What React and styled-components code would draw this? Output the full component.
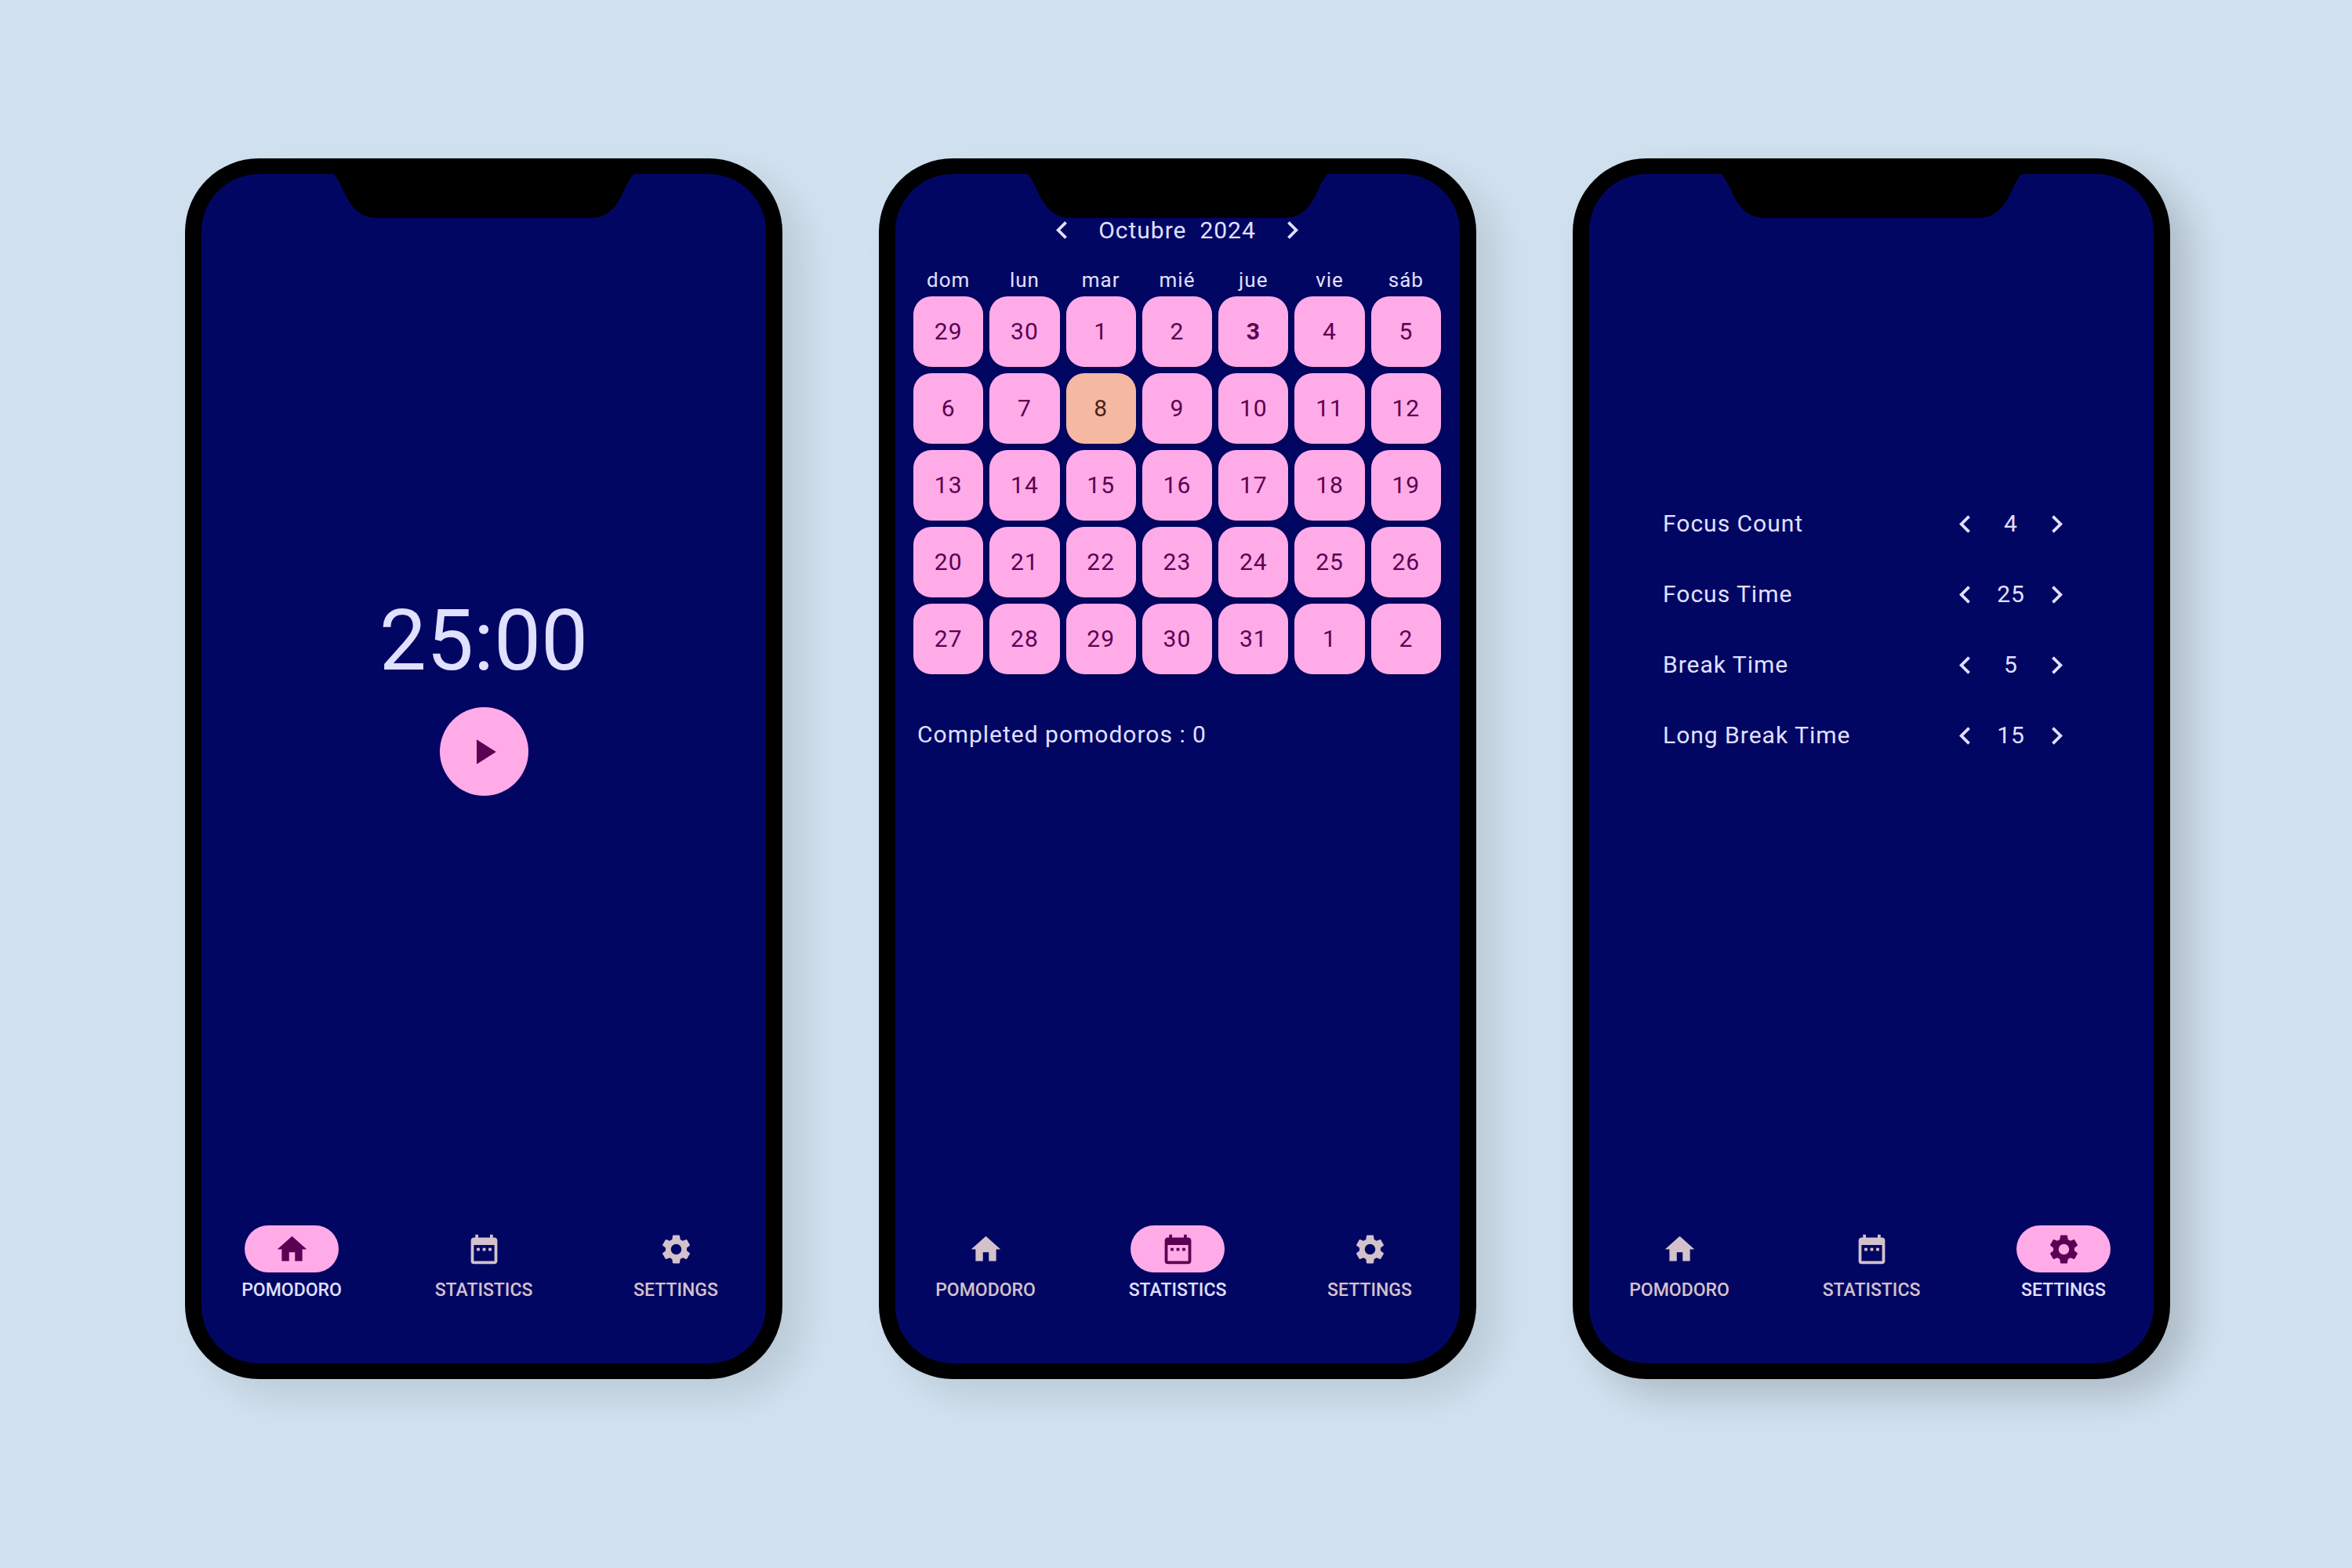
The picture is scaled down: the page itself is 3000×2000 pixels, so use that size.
import React, { useState } from "react";
import styled, { createGlobalStyle, css } from "styled-components";
import {
  MdDateRange,
  MdHome,
  MdKeyboardArrowLeft,
  MdKeyboardArrowRight,
  MdPlayArrow,
  MdSettings,
} from "react-icons/md";

const color = {
  page: "#d1e1ef",
  frame: "#000000",
  screen: "#020663",
  primary: "#ffabe8",
  onPrimary: "#5b0052",
  today: "#f5b8a2",
  onToday: "#4c2314",
  text: "#e0e0ff",
  muted: "#d3c2cc",
};

const GlobalStyle = createGlobalStyle`
  *, *::before, *::after {
    box-sizing: border-box;
  }
  body {
    margin: 0;
    background: ${color.page};
    color: ${color.text};
    font-family: Roboto, "Noto Sans", sans-serif;
    font-size: 30px;
    line-height: 44px;
    letter-spacing: 1px;
  }
  button {
    margin: 0;
    padding: 0;
    border: 0;
    background: none;
    color: inherit;
    font: inherit;
    letter-spacing: inherit;
    cursor: pointer;
  }
`;

const Stage = styled.main`
  display: grid;
  grid-template-columns: repeat(3, minmax(0, 762px));
  justify-content: center;
  align-items: start;
  gap: 123px;
  min-height: 100vh;
  padding: 202px 0 200px 4px;
`;

const Phone = styled.section`
  display: flex;
  aspect-ratio: 762 / 1557;
  padding: 20px 21px;
  border-radius: 94px;
  background: ${color.frame};
  box-shadow: 26px 22px 48px rgba(0, 0, 0, ${(p) => p.$shade});
`;

const Screen = styled.div`
  position: relative;
  flex: 1;
  min-width: 0;
  display: flex;
  flex-direction: column;
  overflow: hidden;
  border-radius: 73px;
  background: ${color.screen};
`;

const NotchShape = styled.svg`
  position: absolute;
  top: 0;
  left: 50%;
  width: 382px;
  height: 56px;
  transform: translateX(-50%);
`;

const Content = styled.div`
  flex: 1;
  display: flex;
  flex-direction: column;
`;

const NavBar = styled.nav`
  display: grid;
  grid-template-columns: repeat(3, 1fr);
  gap: 15px;
  padding: 24px 0 78px;
`;

const NavLink = styled.a`
  display: flex;
  flex-direction: column;
  align-items: center;
  gap: 8px;
  color: ${(p) => (p.$active ? color.text : color.muted)};
  font-size: 23px;
  font-weight: 500;
  line-height: 30px;
  letter-spacing: 0;
  text-decoration: none;
`;

const Pill = styled.span`
  display: grid;
  place-items: center;
  width: 120px;
  height: 60px;
  border-radius: 30px;
  font-size: 45px;
  ${(p) =>
    p.$active &&
    css`
      background: ${color.primary};
      color: ${color.onPrimary};
    `}
`;

const IconButton = styled.button`
  display: grid;
  place-items: center;
  width: 45px;
  height: 45px;
  font-size: 45px;
`;

const TimerContent = styled(Content)`
  align-items: center;
  gap: 24px;
  padding-top: 536px;
`;

const Clock = styled.time`
  font-size: 107px;
  line-height: 120px;
  letter-spacing: 0;
`;

const PlayButton = styled.button`
  display: grid;
  place-items: center;
  width: 113px;
  height: 113px;
  border-radius: 50%;
  background: ${color.primary};
  color: ${color.onPrimary};
  font-size: 54px;
`;

const CalendarContent = styled(Content)`
  padding: 49px 16px 0 15px;
`;

const MonthBar = styled.header`
  display: flex;
  align-items: center;
  justify-content: center;
  gap: 24px;
`;

const Month = styled.h2`
  margin: 0;
  font-size: 30px;
  font-weight: 400;
  white-space: pre;
`;

const Calendar = styled.table`
  width: 100%;
  margin-top: 20px;
  table-layout: fixed;
  border-collapse: separate;
  border-spacing: 8px;
`;

const Weekday = styled.th`
  padding: 0;
  font-size: 26px;
  font-weight: 400;
  line-height: 26px;
`;

const DayCell = styled.td`
  padding: 0;
`;

const DayButton = styled.button`
  display: block;
  width: 100%;
  height: 90px;
  border-radius: 23px;
  background: ${(p) => (p.$today ? color.today : color.primary)};
  color: ${(p) => (p.$today ? color.onToday : color.onPrimary)};
  font-weight: ${(p) => (p.$strong ? 700 : 400)};
  box-shadow: 0 2px 4px rgba(0, 0, 0, 0.2);
`;

const Summary = styled.p`
  margin: 47px 0 0;
  padding: 0 13px;
`;

const SettingsContent = styled(Content)`
  padding: 401px 101px 0 94px;
`;

const SettingRow = styled.div`
  display: flex;
  align-items: center;
  justify-content: space-between;
  height: 90px;
`;

const Stepper = styled.div`
  display: flex;
  align-items: center;
`;

const StepValue = styled.output`
  width: 72px;
  text-align: center;
`;

const tabs = [
  { id: "pomodoro", label: "POMODORO", Icon: MdHome },
  { id: "statistics", label: "STATISTICS", Icon: MdDateRange },
  { id: "settings", label: "SETTINGS", Icon: MdSettings },
];

const weekdays = ["dom", "lun", "mar", "mié", "jue", "vie", "sáb"];

const weeks = [
  [29, 30, 1, 2, 3, 4, 5],
  [6, 7, 8, 9, 10, 11, 12],
  [13, 14, 15, 16, 17, 18, 19],
  [20, 21, 22, 23, 24, 25, 26],
  [27, 28, 29, 30, 31, 1, 2],
];

const settings = [
  { id: "focus-count", label: "Focus Count", value: 4 },
  { id: "focus-time", label: "Focus Time", value: 25 },
  { id: "break-time", label: "Break Time", value: 5 },
  { id: "long-break-time", label: "Long Break Time", value: 15 },
];

function Notch() {
  return (
    <NotchShape viewBox="0 0 382 56" aria-hidden="true">
      <path
        fill={color.frame}
        d="M0 0H382C372 13 370 24 362 36C354 49 342 56 328 56H54C40 56 28 49 20 36C12 24 10 13 0 0Z"
      />
    </NotchShape>
  );
}

function Device({ active, shade, children }) {
  return (
    <Phone $shade={shade}>
      <Screen>
        {children}
        <NavBar>
          {tabs.map(({ id, label, Icon }) => (
            <NavLink
              key={id}
              href={`#${id}`}
              $active={id === active}
              aria-current={id === active ? "page" : undefined}
            >
              <Pill $active={id === active}>
                <Icon aria-hidden="true" />
              </Pill>
              {label}
            </NavLink>
          ))}
        </NavBar>
        <Notch />
      </Screen>
    </Phone>
  );
}

function Setting({ id, label, initial }) {
  const [value, setValue] = useState(initial);
  return (
    <SettingRow role="group" aria-labelledby={id}>
      <span id={id}>{label}</span>
      <Stepper>
        <IconButton aria-label="Decrease" onClick={() => setValue(Math.max(1, value - 1))}>
          <MdKeyboardArrowLeft />
        </IconButton>
        <StepValue>{value}</StepValue>
        <IconButton aria-label="Increase" onClick={() => setValue(value + 1)}>
          <MdKeyboardArrowRight />
        </IconButton>
      </Stepper>
    </SettingRow>
  );
}

export default function App() {
  return (
    <>
      <GlobalStyle />
      <Stage>
        <Device active="pomodoro" shade={0.1}>
          <TimerContent>
            <Clock>25:00</Clock>
            <PlayButton aria-label="Start">
              <MdPlayArrow />
            </PlayButton>
          </TimerContent>
        </Device>

        <Device active="statistics" shade={0.1}>
          <CalendarContent>
            <MonthBar>
              <IconButton aria-label="Previous month">
                <MdKeyboardArrowLeft />
              </IconButton>
              <Month>{"Octubre  2024"}</Month>
              <IconButton aria-label="Next month">
                <MdKeyboardArrowRight />
              </IconButton>
            </MonthBar>
            <Calendar>
              <thead>
                <tr>
                  {weekdays.map((day) => (
                    <Weekday key={day} scope="col">
                      {day}
                    </Weekday>
                  ))}
                </tr>
              </thead>
              <tbody>
                {weeks.map((week, row) => (
                  <tr key={row}>
                    {week.map((day) => (
                      <DayCell key={day}>
                        <DayButton $today={day === 8} $strong={day === 3}>
                          {day}
                        </DayButton>
                      </DayCell>
                    ))}
                  </tr>
                ))}
              </tbody>
            </Calendar>
            <Summary>Completed pomodoros : 0</Summary>
          </CalendarContent>
        </Device>

        <Device active="settings" shade={0.17}>
          <SettingsContent>
            {settings.map(({ id, label, value }) => (
              <Setting key={id} id={id} label={label} initial={value} />
            ))}
          </SettingsContent>
        </Device>
      </Stage>
    </>
  );
}
